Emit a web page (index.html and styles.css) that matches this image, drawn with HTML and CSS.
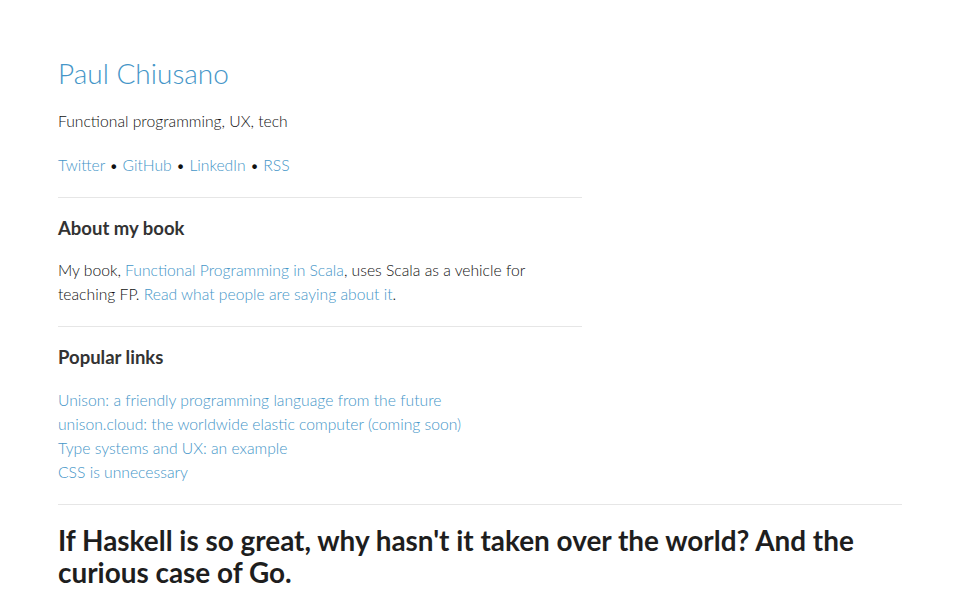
FILE: index.html
```html
<!DOCTYPE html>
<html lang="en">
<head>
    <meta charset="UTF-8">
    <title>Paul Chiusano</title>
    <link rel="stylesheet" href="styles.css">
</head>
<body>
    <div class="page">
        <div class="sidebar">
            <h2 class="site-title"><a href="#">Paul Chiusano</a></h2>
            <p class="tagline">Functional programming, UX, tech</p>
            <p class="social">
                <a href="#">Twitter</a> &bull; <a href="#">GitHub</a> &bull; <a href="#">LinkedIn</a> &bull; <a href="#">RSS</a>
            </p>
            <hr>
            <h3>About my book</h3>
            <p>My book, <a href="#">Functional Programming in Scala</a>, uses Scala as a vehicle for teaching FP. <a href="#">Read what people are saying about it</a>.</p>
            <hr>
            <h3>Popular links</h3>
            <ul class="popular">
                <li><a href="#">Unison: a friendly programming language from the future</a></li>
                <li><a href="#">unison.cloud: the worldwide elastic computer (coming soon)</a></li>
                <li><a href="#">Type systems and UX: an example</a></li>
                <li><a href="#">CSS is unnecessary</a></li>
            </ul>
        </div>
        <hr>
        <h1 class="post-title">If Haskell is so great, why hasn't it taken over the world? And the curious case of Go.</h1>
    </div>
</body>
</html>
```

FILE: styles.css
```css
body {
    margin: 0;
    font-family: 'Lato', 'Open Sans', sans-serif;
    font-weight: 300;
    font-size: 15.7px;
    line-height: 24px;
    color: #111;
    background: #fff;
}
a {
    color: #4596c8;
    text-decoration: none;
}
.page {
    width: 844px;
    padding: 55px 0 0 58px;
}
.sidebar {
    width: 524px;
}
/* the paragraph text wraps a little short of the rule */
.sidebar p {
    max-width: 480px;
}
.site-title {
    margin: 0 0 18px 0;
    font-size: 28px;
    font-weight: 300;
    line-height: 36px;
}
p {
    margin: 0 0 20px 0;
}
hr {
    border: none;
    border-top: 1px solid #e6e6e6;
    margin: 0;
}
h3 {
    margin: 18px 0 18px 0;
    font-size: 18.5px;
    font-weight: 700;
    line-height: 24px;
    color: #333;
}
.popular {
    list-style: none;
    margin: 0 0 20px 0;
    padding: 1px 0 0 0;
}
.post-title {
    margin: 19px 0 0 0;
    font-size: 27.9px;
    font-weight: 700;
    line-height: 32px;
    color: #1e1e1e;
}
```
